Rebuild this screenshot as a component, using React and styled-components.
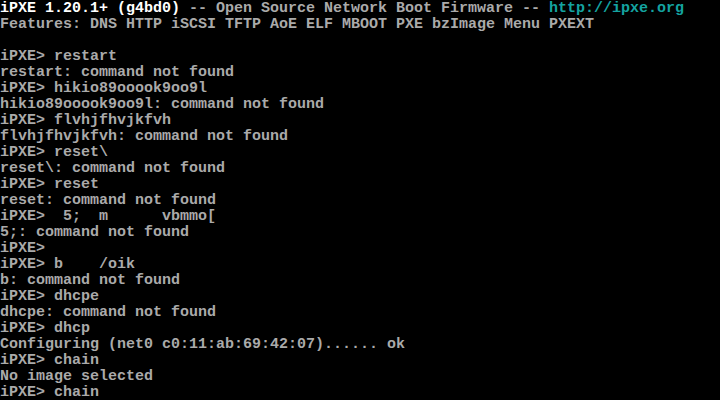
import React from "react";
import styled, { createGlobalStyle } from "styled-components";

const Global = createGlobalStyle`
  html, body {
    margin: 0;
    padding: 0;
    background: #000;
  }
  #root {
    min-height: 400px;
    background: #000;
  }
`;

const Screen = styled.div`
  width: 720px;
  height: 400px;
  box-sizing: border-box;
  padding-top: 1px;
  overflow: hidden;
  background: #000;
  color: #aaaaaa;
  font-family: "Liberation Mono", "DejaVu Sans Mono", monospace;
  font-size: 15px;
  font-weight: bold;
  line-height: 16px;
  display: flex;
  flex-direction: column;
`;

const Line = styled.div`
  height: 16px;
  flex: none;
  white-space: pre;
  letter-spacing: 0;
`;

const Bright = styled.span`
  color: #ffffff;
`;

const Cyan = styled.span`
  color: #14a3a0;
`;

const lines = [
  "Features: DNS HTTP iSCSI TFTP AoE ELF MBOOT PXE bzImage Menu PXEXT",
  "",
  "iPXE> restart",
  "restart: command not found",
  "iPXE> hikio89ooook9oo9l",
  "hikio89ooook9oo9l: command not found",
  "iPXE> flvhjfhvjkfvh",
  "flvhjfhvjkfvh: command not found",
  "iPXE> reset\\",
  "reset\\: command not found",
  "iPXE> reset",
  "reset: command not found",
  "iPXE>  5;  m      vbmmo[",
  "5;: command not found",
  "iPXE>",
  "iPXE> b    /oik",
  "b: command not found",
  "iPXE> dhcpe",
  "dhcpe: command not found",
  "iPXE> dhcp",
  "Configuring (net0 c0:11:ab:69:42:07)...... ok",
  "iPXE> chain",
  "No image selected",
  "iPXE> chain",
];

export default function App() {
  return (
    <>
      <Global />
      <Screen>
        <Line>
          <Bright>iPXE 1.20.1+ (g4bd0)</Bright>
          {" -- Open Source Network Boot Firmware -- "}
          <Cyan>http://ipxe.org</Cyan>
        </Line>
        {lines.map((t, i) => (
          <Line key={i}>{t}</Line>
        ))}
      </Screen>
    </>
  );
}
